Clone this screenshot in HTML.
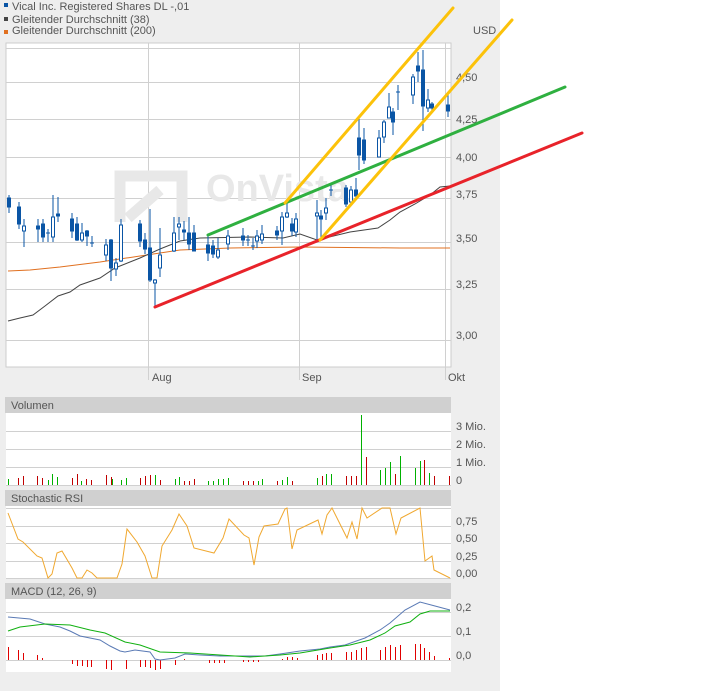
<!DOCTYPE html>
<html><head><meta charset="utf-8"><style>
html,body{margin:0;padding:0;width:702px;height:691px;background:#fff;overflow:hidden}
svg{display:block}
text{font-family:"Liberation Sans",sans-serif;font-size:11px;fill:#555}
</style></head><body>
<svg width="702" height="691" xmlns="http://www.w3.org/2000/svg">
<rect x="0" y="0" width="500" height="691" fill="#eeeeee"/>
<!-- legend -->
<rect x="4" y="3" width="4" height="4" fill="#0a55a5"/><text x="12" y="10">Vical Inc. Registered Shares DL -,01</text>
<rect x="4" y="17" width="4" height="4" fill="#444"/><text x="12" y="23">Gleitender Durchschnitt (38)</text>
<rect x="4" y="30" width="4" height="4" fill="#e07020"/><text x="12" y="34">Gleitender Durchschnitt (200)</text>
<!-- main panel -->
<rect x="6" y="43" width="445" height="324" fill="#fff" stroke="#ccc" stroke-width="1"/>
<g stroke="#d0d0d0" stroke-width="1">
<line x1="6" y1="48.5" x2="451" y2="48.5"/><line x1="6" y1="82.5" x2="451" y2="82.5"/><line x1="6" y1="119.5" x2="451" y2="119.5"/><line x1="6" y1="157.5" x2="451" y2="157.5"/><line x1="6" y1="198.5" x2="451" y2="198.5"/><line x1="6" y1="242.5" x2="451" y2="242.5"/><line x1="6" y1="289.5" x2="451" y2="289.5"/><line x1="6" y1="340.5" x2="451" y2="340.5"/>
<line x1="148.5" y1="43" x2="148.5" y2="380"/><line x1="299.5" y1="43" x2="299.5" y2="380"/><line x1="445.5" y1="43" x2="445.5" y2="380"/>
</g>
<!-- watermark -->
<g fill="none" stroke="#e8e8e8" stroke-width="11"><path d="M120 222 V176 H182 V222"/><path d="M128 218 L160 190"/></g>
<text x="206" y="201" style="font-size:38px;font-weight:bold;fill:#e8e8e8">OnVista</text>
<!-- axis labels -->
<text x="473" y="34">USD</text>
<text x="456" y="81">4,50</text><text x="456" y="123">4,25</text><text x="456" y="161">4,00</text><text x="456" y="198">3,75</text><text x="456" y="242">3,50</text><text x="456" y="288">3,25</text><text x="456" y="339">3,00</text>
<text x="152" y="381">Aug</text><text x="302" y="381">Sep</text><text x="448" y="381">Okt</text>
<!-- MAs -->
<polyline fill="none" stroke="#e07020" stroke-width="1" points="8,271 30,270 60,267 100,262 140,256 180,250 230,248 300,247 400,248 450,248"/>
<polyline fill="none" stroke="#444" stroke-width="1" points="8,321 20,318 33,315 45,306 58,296 70,292 80,285 100,278 115,268 140,258 160,249 180,241 200,238 250,237 283,238 300,234 317,240 350,232 378,228 390,220 400,212 415,204 430,195 440,187 450,186"/>
<!-- candles -->
<g stroke="#0a55a5" stroke-width="1" fill="#0a55a5">
<line x1="9" y1="195" x2="9" y2="213"/><rect x="7.5" y="198" width="3" height="9"/>
<line x1="19" y1="202" x2="19" y2="229"/><rect x="17.5" y="207" width="3" height="17"/>
<line x1="24" y1="219" x2="24" y2="247"/><rect x="22.5" y="226" width="3" height="5" fill="#fff"/>
<line x1="38" y1="219" x2="38" y2="242"/><rect x="36.5" y="226" width="3" height="3"/>
<line x1="43" y1="219" x2="43" y2="242"/><rect x="41.5" y="224" width="3" height="13"/>
<line x1="48" y1="229" x2="48" y2="242"/><line x1="46" y1="233" x2="50" y2="233"/>
<line x1="53" y1="195" x2="53" y2="242"/><rect x="51.5" y="217" width="3" height="20" fill="#fff"/>
<line x1="58" y1="197" x2="58" y2="222"/><rect x="56.5" y="214" width="3" height="2"/>
<line x1="72" y1="213" x2="72" y2="238"/><rect x="70.5" y="219" width="3" height="12"/>
<line x1="77" y1="217" x2="77" y2="241"/><rect x="75.5" y="224" width="3" height="16"/>
<line x1="82" y1="223" x2="82" y2="242"/><rect x="80.5" y="233" width="3" height="7" fill="#fff"/>
<line x1="87" y1="230" x2="87" y2="246"/><rect x="85.5" y="231" width="3" height="5"/>
<line x1="92" y1="236" x2="92" y2="247"/><line x1="90" y1="243" x2="94" y2="243"/>
<line x1="106" y1="239" x2="106" y2="261"/><rect x="104.5" y="245" width="3" height="10" fill="#fff"/>
<line x1="111" y1="239" x2="111" y2="281"/><rect x="109.5" y="240" width="3" height="28"/>
<line x1="116" y1="258" x2="116" y2="276"/><rect x="114.5" y="263" width="3" height="6" fill="#fff"/>
<line x1="121" y1="219" x2="121" y2="262"/><rect x="119.5" y="225" width="3" height="36" fill="#fff"/>
<line x1="140" y1="220" x2="140" y2="247"/><rect x="138.5" y="224" width="3" height="17"/>
<line x1="145" y1="233" x2="145" y2="254"/><rect x="143.5" y="240" width="3" height="9"/>
<line x1="150" y1="209" x2="150" y2="282"/><rect x="148.5" y="248" width="3" height="32"/>
<line x1="155" y1="279" x2="155" y2="307"/><rect x="153.5" y="280" width="3" height="3" fill="#fff"/>
<line x1="160" y1="228" x2="160" y2="277"/><rect x="158.5" y="255" width="3" height="13" fill="#fff"/>
<line x1="174" y1="217" x2="174" y2="252"/><rect x="172.5" y="233" width="3" height="18" fill="#fff"/>
<line x1="179" y1="217" x2="179" y2="240"/><rect x="177.5" y="224" width="3" height="3" fill="#fff"/>
<line x1="184" y1="221" x2="184" y2="240"/><rect x="182.5" y="230" width="3" height="2"/>
<line x1="189" y1="217" x2="189" y2="250"/><rect x="187.5" y="233" width="3" height="11"/>
<line x1="194" y1="225" x2="194" y2="251"/><rect x="192.5" y="233" width="3" height="18"/>
<line x1="208" y1="236" x2="208" y2="261"/><rect x="206.5" y="245" width="3" height="8"/>
<line x1="213" y1="240" x2="213" y2="258"/><rect x="211.5" y="246" width="3" height="8"/>
<line x1="218" y1="238" x2="218" y2="259"/><rect x="216.5" y="250" width="3" height="7" fill="#fff"/>
<line x1="228" y1="230" x2="228" y2="250"/><rect x="226.5" y="236" width="3" height="8" fill="#fff"/>
<line x1="243" y1="228" x2="243" y2="246"/><rect x="241.5" y="236" width="3" height="4"/>
<line x1="248" y1="235" x2="248" y2="246"/><line x1="246" y1="240" x2="250" y2="240"/>
<line x1="253" y1="238" x2="253" y2="250"/><line x1="251" y1="246" x2="255" y2="246"/>
<line x1="257" y1="230" x2="257" y2="248"/><rect x="255.5" y="236" width="3" height="5" fill="#fff"/>
<line x1="262" y1="225" x2="262" y2="244"/><rect x="260.5" y="234" width="3" height="6" fill="#fff"/>
<line x1="277" y1="226" x2="277" y2="240"/><rect x="275.5" y="231" width="3" height="4"/>
<line x1="282" y1="212" x2="282" y2="245"/><rect x="280.5" y="217" width="3" height="14" fill="#fff"/>
<line x1="287" y1="202" x2="287" y2="218"/><rect x="285.5" y="213" width="3" height="4" fill="#fff"/>
<line x1="292" y1="218" x2="292" y2="236"/><rect x="290.5" y="224" width="3" height="7"/>
<line x1="296" y1="213" x2="296" y2="237"/><rect x="294.5" y="219" width="3" height="13" fill="#fff"/>
<line x1="317" y1="200" x2="317" y2="240"/><rect x="315.5" y="213" width="3" height="3" fill="#fff"/>
<line x1="321" y1="210" x2="321" y2="240"/><rect x="319.5" y="216" width="3" height="3"/>
<line x1="326" y1="198" x2="326" y2="220"/><rect x="324.5" y="208" width="3" height="5" fill="#fff"/>
<line x1="331" y1="185" x2="331" y2="196"/><line x1="329" y1="190" x2="333" y2="190"/>
<line x1="346" y1="185" x2="346" y2="207"/><rect x="344.5" y="188" width="3" height="16"/>
<line x1="351" y1="186" x2="351" y2="205"/><rect x="349.5" y="190" width="3" height="12" fill="#fff"/>
<line x1="356" y1="178" x2="356" y2="200"/><rect x="354.5" y="190" width="3" height="6"/>
<line x1="359" y1="118" x2="359" y2="170"/><rect x="357.5" y="138" width="3" height="17"/>
<line x1="364" y1="128" x2="364" y2="164"/><rect x="362.5" y="140" width="3" height="20"/>
<line x1="379" y1="130" x2="379" y2="157"/><rect x="377.5" y="138" width="3" height="19" fill="#fff"/>
<line x1="384" y1="120" x2="384" y2="143"/><rect x="382.5" y="122" width="3" height="15" fill="#fff"/>
<line x1="389" y1="93" x2="389" y2="118"/><rect x="387.5" y="107" width="3" height="11" fill="#fff"/>
<line x1="393" y1="108" x2="393" y2="135"/><rect x="391.5" y="112" width="3" height="10"/>
<line x1="398" y1="85" x2="398" y2="110"/><line x1="396" y1="92" x2="400" y2="92"/>
<line x1="413" y1="74" x2="413" y2="104"/><rect x="411.5" y="77" width="3" height="18" fill="#fff"/>
<line x1="418" y1="52" x2="418" y2="82"/><rect x="416.5" y="66" width="3" height="5"/>
<line x1="423" y1="50" x2="423" y2="131"/><rect x="421.5" y="70" width="3" height="36"/>
<line x1="428" y1="89" x2="428" y2="112"/><rect x="426.5" y="100" width="3" height="8" fill="#fff"/>
<line x1="432" y1="102" x2="432" y2="110"/><rect x="430.5" y="104" width="3" height="4"/>
<line x1="448" y1="95" x2="448" y2="117"/><rect x="446.5" y="105" width="3" height="6"/>
</g>
<!-- trend lines -->
<g stroke-width="3" fill="none" stroke-linecap="round">
<line x1="155" y1="307" x2="582" y2="133" stroke="#e8232a"/>
<line x1="208" y1="235" x2="565" y2="87" stroke="#2fb040"/>
<line x1="285" y1="203" x2="453" y2="8" stroke="#fcc20a"/>
<line x1="320" y1="240" x2="512" y2="20" stroke="#fcc20a"/>
</g>
<!-- Volume -->
<rect x="5" y="397" width="446" height="16" fill="#d0d0d0"/>
<text x="11" y="409">Volumen</text>
<rect x="6" y="413" width="445" height="73" fill="#fff"/>
<g stroke="#d0d0d0"><line x1="6" y1="431.5" x2="451" y2="431.5"/><line x1="6" y1="449.5" x2="451" y2="449.5"/><line x1="6" y1="467.5" x2="451" y2="467.5"/><line x1="6" y1="485.5" x2="451" y2="485.5"/></g>
<text x="456" y="430">3 Mio.</text><text x="456" y="448">2 Mio.</text><text x="456" y="466">1 Mio.</text><text x="456" y="484">0</text>
<g stroke-width="1">
<path stroke="#00b000" d="M8.5 485V479M48.5 485V480M52.5 485V474M57.5 485V477M81.5 485V481M112.5 485V479M121.5 485V480M126.5 485V478M155.5 485V475M175.5 485V479M179.5 485V477M184.5 485V481M208.5 485V481M213.5 485V481M218.5 485V479M223.5 485V479M228.5 485V478M258.5 485V481M262.5 485V479M282.5 485V480M287.5 485V477M317.5 485V478M326.5 485V474M331.5 485V474M361.5 485V415M380.5 485V470M385.5 485V468M390.5 485V462M400.5 485V456M415.5 485V468M420.5 485V461M429.5 485V473"/>
<path stroke="#c00000" d="M18.5 485V478M23.5 485V476M37.5 485V476M42.5 485V478M72.5 485V478M77.5 485V474M86.5 485V479M91.5 485V480M106.5 485V475M111.5 485V477M140.5 485V478M145.5 485V476M150.5 485V475M160.5 485V480M184.5 485V481M189.5 485V481M194.5 485V479M243.5 485V481M248.5 485V481M253.5 485V481M277.5 485V481M292.5 485V481M322.5 485V476M346.5 485V476M351.5 485V476M356.5 485V476M366.5 485V457M395.5 485V474M424.5 485V460M434.5 485V476M449.5 485V476"/>
</g>
<!-- Stoch RSI -->
<rect x="5" y="490" width="446" height="16" fill="#d0d0d0"/>
<text x="11" y="502">Stochastic RSI</text>
<rect x="6" y="506" width="445" height="73" fill="#fff"/>
<g stroke="#d0d0d0"><line x1="6" y1="508.5" x2="451" y2="508.5"/><line x1="6" y1="526.5" x2="451" y2="526.5"/><line x1="6" y1="543.5" x2="451" y2="543.5"/><line x1="6" y1="561.5" x2="451" y2="561.5"/><line x1="6" y1="578.5" x2="451" y2="578.5"/></g>
<text x="456" y="525">0,75</text><text x="456" y="542">0,50</text><text x="456" y="560">0,25</text><text x="456" y="577">0,00</text>
<polyline fill="none" stroke="#f0a830" stroke-width="1" points="8,513 18,539 23,542 37,556 42,558 48,578 52,574 57,553 62,551 72,568 77,578 82,578 87,570 92,573 97,578 117,578 122,564 127,529 137,542 145,556 152,578 157,578 162,546 172,530 179,514 187,526 194,548 214,553 223,538 229,519 244,535 249,538 254,565 259,537 264,526 278,524 285,509 287,508 292,549 297,530 318,520 322,534 327,515 332,508 347,538 352,522 357,539 362,508 367,518 382,508 390,508 396,534 401,518 420,508 425,561 432,556 434,570 450,578"/>
<!-- MACD -->
<rect x="5" y="583" width="446" height="16" fill="#d0d0d0"/>
<text x="11" y="595">MACD (12, 26, 9)</text>
<rect x="6" y="599" width="445" height="73" fill="#fff"/>
<g stroke="#d0d0d0"><line x1="6" y1="612.5" x2="451" y2="612.5"/><line x1="6" y1="636.5" x2="451" y2="636.5"/><line x1="6" y1="660.5" x2="451" y2="660.5"/></g>
<text x="456" y="611">0,2</text><text x="456" y="635">0,1</text><text x="456" y="659">0,0</text>
<path stroke="#e00000" stroke-width="1" d="M8.5 660V647M18.5 660V650M23.5 660V653M37.5 660V655M42.5 660V658M72.5 660V664M77.5 660V666M82.5 660V666M87.5 660V667M91.5 660V667M106.5 660V669M111.5 660V670M126.5 660V669M140.5 660V667M145.5 660V667M150.5 660V668M155.5 660V670M160.5 660V669M175.5 660V665M184.5 660V659M209.5 660V663M214.5 660V663M219.5 660V663M224.5 660V663M243.5 660V662M248.5 660V662M253.5 660V662M258.5 660V662M282.5 660V659M287.5 660V657M292.5 660V657M297.5 660V658M317.5 660V655M322.5 660V654M326.5 660V653M331.5 660V653M346.5 660V652M351.5 660V652M356.5 660V650M361.5 660V648M366.5 660V647M380.5 660V650M385.5 660V647M390.5 660V645M395.5 660V647M400.5 660V645M415.5 660V644M420.5 660V644M424.5 660V648M429.5 660V652M434.5 660V656M449.5 660V658"/>
<polyline fill="none" stroke="#5a7ab5" stroke-width="1" points="8,617 30,619 45,624 60,627 70,631 80,636 100,640 110,646 120,651 125,652 135,650 150,652 155,659 160,660 175,658 185,654 200,655 220,656 250,656 265,656 280,654 300,651 320,649 330,647 345,645 365,638 380,630 390,623 405,610 420,602 435,606 450,610"/>
<polyline fill="none" stroke="#10b010" stroke-width="1" points="8,631 20,627 45,624 70,625 90,630 105,633 125,642 140,645 160,652 190,653 250,657 280,655 300,653 330,648 350,645 370,640 385,633 395,626 410,622 420,614 430,611 450,611"/>
</svg>
</body></html>
